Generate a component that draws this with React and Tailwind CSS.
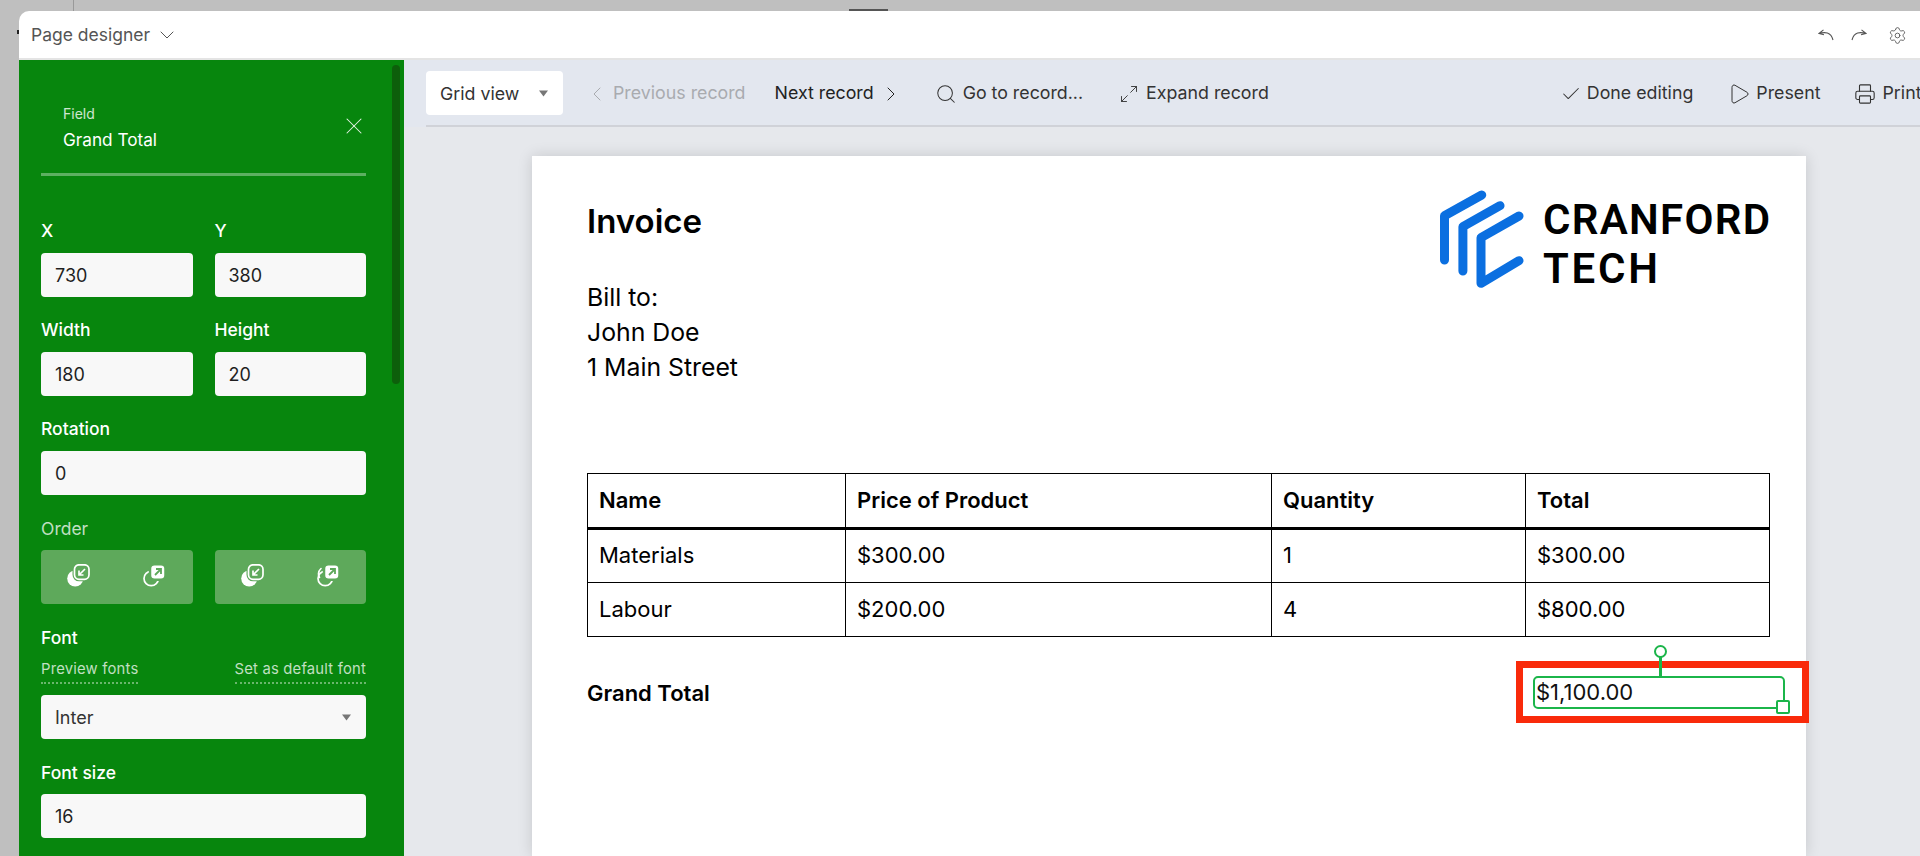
import React from "react";
import { ChevronDown, ChevronLeft, ChevronRight, X, Search, Check, Play, Printer, Settings, Maximize2 } from "lucide-react";

const Caret = ({ cls = "" }) => (
  <svg width="9" height="7" viewBox="0 0 9 7" className={cls}><path d="M0 .5h9L4.5 6.5z" fill="#777" /></svg>
);

const Field = ({ label, value }) => (
  <div className="min-w-0">
    <div className="h-5 leading-[22px] text-[17.5px] mb-[13px] text-white font-medium">{label}</div>
    <div className="h-11 rounded-[4px] bg-[#f8f8f8] pl-[14px] pt-[1px] flex items-center text-[18px] text-[#1f1f1f]">{value}</div>
  </div>
);

const BG = "#5ea95b";

const OrderIcon = ({ kind }) => (
  <svg width="23" height="23" viewBox="0 0 23 23" className="-mt-[4px]">
    {kind === 3 && <path d="M4 4.5a7.5 7.5 0 0 0-1.5 9" fill="none" stroke="#fff" strokeWidth="1.6" strokeLinecap="round" />}
    {(kind === 0 || kind === 2) && <circle cx="8.2" cy="14.5" r="8" fill="#fff" />}
    {(kind === 1 || kind === 3) && <circle cx="8.2" cy="14.5" r="7.2" fill="none" stroke="#fff" strokeWidth="1.7" />}
    {kind === 0 || kind === 2 ? (
      <>
        <rect x="7.5" y="0.8" width="14.5" height="14.5" rx="4.5" fill={BG} stroke={BG} strokeWidth="4" />
        <rect x="7.5" y="0.8" width="14.5" height="14.5" rx="4.5" fill={BG} stroke="#fff" strokeWidth="1.7" />
        <path d="M18 5l-5.5 5.5M12 6.5V11h4.5" fill="none" stroke="#fff" strokeWidth="1.7" />
      </>
    ) : (
      <>
        <rect x="7" y="0.3" width="15.5" height="15.5" rx="4.5" fill="#fff" stroke={BG} strokeWidth="2.5" />
        <path d="M12 11l5.5-5.5M13 5h5v5" fill="none" stroke={BG} strokeWidth="1.8" />
      </>
    )}
  </svg>
);

const OrderGroup = ({ kinds }) => (
  <div className="h-[54px] rounded-[4px] bg-[#5ea95b] grid grid-cols-2">
    {kinds.map((k) => (
      <div key={k} className="flex items-center justify-center"><OrderIcon kind={k} /></div>
    ))}
  </div>
);

const Sidebar = () => (
  <aside className="relative w-[385px] shrink-0 bg-[#07860d] px-[22px] overflow-hidden">
    <div className="absolute right-[4px] top-[5px] w-[8px] h-[319px] rounded-full bg-[#0d5f0b]" />
    <div className="pl-[22px] pt-[44px] h-[113px] flex items-start justify-between w-[325px]">
      <div>
        <div className="text-[14px] leading-[20px] text-white/80">Field</div>
        <div className="text-[17.2px] leading-[24px] mt-[4px] text-white">Grand Total</div>
      </div>
      <X size={28} strokeWidth={0.9} className="text-white/90 mt-[8px] mr-[-2px]" />
    </div>
    <div className="w-[325px] h-[3px] bg-white/35" />
    <div className="w-[325px] pt-[44px]">
      <div className="grid grid-cols-2 gap-x-[22px] gap-y-[22px]">
        <Field label="X" value="730" />
        <Field label="Y" value="380" />
        <Field label="Width" value="180" />
        <Field label="Height" value="20" />
      </div>
      <div className="mt-[22px]"><Field label="Rotation" value="0" /></div>
      <div className="mt-[24px] h-5 leading-5 text-[17.5px] text-white/75">Order</div>
      <div className="mt-[11px] grid grid-cols-2 gap-x-[22px]">
        <OrderGroup kinds={[0, 1]} />
        <OrderGroup kinds={[2, 3]} />
      </div>
      <div className="mt-[23px] h-5 leading-[22px] text-[17.5px] font-medium text-white">Font</div>
      <div className="mt-[12px] flex justify-between items-start text-[14.8px] tracking-[0.2px] text-white/75">
        <span className="leading-[20px] pb-[3px] border-b-2 border-dotted border-white/40">Preview fonts</span>
        <span className="leading-[20px] pb-[3px] border-b-2 border-dotted border-white/40">Set as default font</span>
      </div>
      <div className="mt-[11px] h-11 rounded-[4px] bg-[#f8f8f8] pl-[14px] pr-[15px] pt-[1px] flex items-center justify-between text-[18px] text-[#333]">
        Inter <Caret />
      </div>
      <div className="mt-[22px]">
        <div className="h-5 leading-[24px] text-[17.5px] mb-[13px] text-white font-medium">Font size</div>
        <div className="h-11 rounded-[4px] bg-[#f8f8f8] pl-[14px] pt-[1px] flex items-center text-[18px] text-[#1f1f1f]">16</div>
      </div>
    </div>
  </aside>
);

const ToolItem = ({ children, cls = "" }) => (
  <div className={`flex items-center shrink-0 whitespace-nowrap ${cls}`}>{children}</div>
);

const Toolbar = () => (
  <div className="h-[67px] shrink-0 bg-[#e3e7ef] relative">
    <div className="absolute left-[22px] right-0 bottom-0 h-[2px] bg-[#d0d2d8]" />
    <div className="h-[65px] pl-[22px] pt-[2px] flex items-center text-[17.8px] text-[#333] overflow-hidden">
      <ToolItem cls="w-[137px] h-11 -mt-[2px] rounded-[4px] bg-white pl-[14px] pr-[15px] pt-[4px] justify-between mr-[22px]">
        Grid view <Caret cls="-mt-[3px]" />
      </ToolItem>
      <ToolItem cls="text-[#a9abaf] gap-[4px] mr-[29px]"><ChevronLeft size={24} strokeWidth={1} />Previous record</ToolItem>
      <ToolItem cls="text-[#222] gap-[5px] mr-[32px]">Next record<ChevronRight size={24} strokeWidth={1} /></ToolItem>
      <ToolItem cls="gap-[6px] mr-[36px]"><Search size={22} strokeWidth={1.1} />Go to record...</ToolItem>
      <ToolItem cls="gap-[7px]"><Maximize2 size={20} strokeWidth={1.1} />Expand record</ToolItem>
      <ToolItem cls="gap-[5px] ml-[291px] mr-[34px]"><Check size={22} strokeWidth={1.1} />Done editing</ToolItem>
      <ToolItem cls="gap-[5px] mr-[33px]"><Play size={24} strokeWidth={1} />Present</ToolItem>
      <ToolItem cls="gap-[7px]"><Printer size={22} strokeWidth={1.2} />Print</ToolItem>
    </div>
  </div>
);

const cols = ["Name", "Price of Product", "Quantity", "Total"];
const rows = [
  ["Materials", "$300.00", "1", "$300.00"],
  ["Labour", "$200.00", "4", "$800.00"],
];

const Logo = () => (
  <div className="flex items-start shrink-0">
    <svg width="84" height="98" viewBox="0 0 84 98" className="mr-[19px]">
      <g fill="none" stroke="#0b6fe0" strokeWidth="9" strokeLinecap="round" strokeLinejoin="round">
        <path d="M41.7 5 4.5 25.7V70" />
        <path d="M60 15.7 22.9 36.7V81" />
        <path d="M79 26 41 47.7V93.3L79 70.7" />
      </g>
    </svg>
    <div className="w-[227px] text-[42px] leading-[49px] font-[Roboto,sans-serif] font-semibold text-black pt-[5px] whitespace-nowrap">
      <div className="tracking-[1.3px]">CRANFORD</div>
      <div className="tracking-[2.8px]">TECH</div>
    </div>
  </div>
);

const Selection = () => (
  <div className="relative ml-auto mr-[-15px] w-[252px] h-[33px] rounded-[5px] border-[2.5px] border-[#1bb54a] flex items-start text-[22px] text-[#111] pl-[1px]">
    <span className="pt-[3px] leading-[23px]">$1,100.00</span>
    <div className="absolute left-[-19.5px] top-[-17.5px] w-[293px] h-[62px] border-[7px] border-[#f92a0a] pointer-events-none" />
    <div className="absolute left-[124px] top-[-22px] w-[2.5px] h-[20px] bg-[#1bb54a]" />
    <div className="absolute left-[119px] top-[-33px] w-[13px] h-[13px] rounded-full bg-white border-2 border-[#1bb54a]" />
    <div className="absolute right-[-7px] bottom-[-7px] w-[14px] h-[14px] rounded-[2px] bg-white border-[2.5px] border-[#1bb54a]" />
  </div>
);

const Page = () => (
  <div className="ml-[128px] mt-[29px] w-[1274px] flex-1 bg-white shadow-[0_0_14px_rgba(0,0,0,0.14)] pt-[34px] pl-[55px] pr-[36px] text-black">
    <div className="flex justify-between items-start">
      <div className="pt-[11px]">
        <div className="text-[33px] leading-[40px] font-semibold">Invoice</div>
        <div className="mt-[39px] text-[24.8px] leading-[35px]">
          <div>Bill to:</div>
          <div>John Doe</div>
          <div>1 Main Street</div>
        </div>
      </div>
      <Logo />
    </div>
    <table className="mt-[88px] w-[1182px] table-fixed border-collapse text-[22px]">
      <colgroup>
        <col className="w-[258px]" />
        <col className="w-[426px]" />
        <col className="w-[254px]" />
        <col className="w-[244px]" />
      </colgroup>
      <thead>
        <tr className="h-[55px]">
          {cols.map((c) => (
            <th key={c} className="border border-black border-b-[3px] pl-[11px] text-left font-semibold">{c}</th>
          ))}
        </tr>
      </thead>
      <tbody>
        {rows.map((r) => (
          <tr key={r[0]} className="h-[54px]">
            {r.map((c, i) => (
              <td key={i} className="border border-black pl-[11px] pb-[1px]">{c}</td>
            ))}
          </tr>
        ))}
      </tbody>
    </table>
    <div className="mt-[39px] flex items-start">
      <span className="text-[22px] font-semibold pt-[4px] leading-[27px]">Grand Total</span>
      <Selection />
    </div>
  </div>
);

export default function App() {
  return (
    <div className="relative h-[856px] w-[1920px] overflow-hidden bg-[#bfbfbf] pt-[11px] pl-[19px] font-[Inter,sans-serif]">
      <div className="absolute left-[73px] top-0 w-px h-[11px] bg-[#999]" />
      <div className="absolute left-[849px] top-[9px] w-[39px] h-[2px] bg-[#555]" />
      <div className="absolute left-[17px] top-[30px] w-[2px] h-[4px] bg-[#222]" />
      <div className="h-[845px] rounded-tl-[10px] overflow-hidden flex flex-col bg-white">
        <header className="h-[49px] shrink-0 border-b-2 border-[#e4e4e4] flex items-center pl-[12px] pr-[13px] pt-[1px] text-[17.5px] text-[#555]">
          Page designer
          <ChevronDown size={24} strokeWidth={1} className="ml-[5px]" />
          <div className="ml-auto flex items-center text-[#555]">
            <svg width="16" height="12" viewBox="0 0 16 12" fill="none" stroke="currentColor" strokeWidth="1.1" className="mr-[17px]">
              <path d="M5.5.8 1 4.5l5 1.2M1.5 4.6c5-2 11.5-1.5 13.5 6.4" />
            </svg>
            <svg width="16" height="12" viewBox="0 0 16 12" fill="none" stroke="currentColor" strokeWidth="1.1" className="mr-[21px]">
              <path d="M10.5.8 15 4.5l-5 1.2M14.5 4.6C9.5 2.6 3 3.1 1 11" />
            </svg>
            <Settings size={19} strokeWidth={1.1} />
          </div>
        </header>
        <div className="flex-1 min-h-0 flex">
          <Sidebar />
          <main className="flex-1 min-w-0 bg-[#e6e8ec] flex flex-col overflow-hidden">
            <Toolbar />
            <Page />
          </main>
        </div>
      </div>
    </div>
  );
}
